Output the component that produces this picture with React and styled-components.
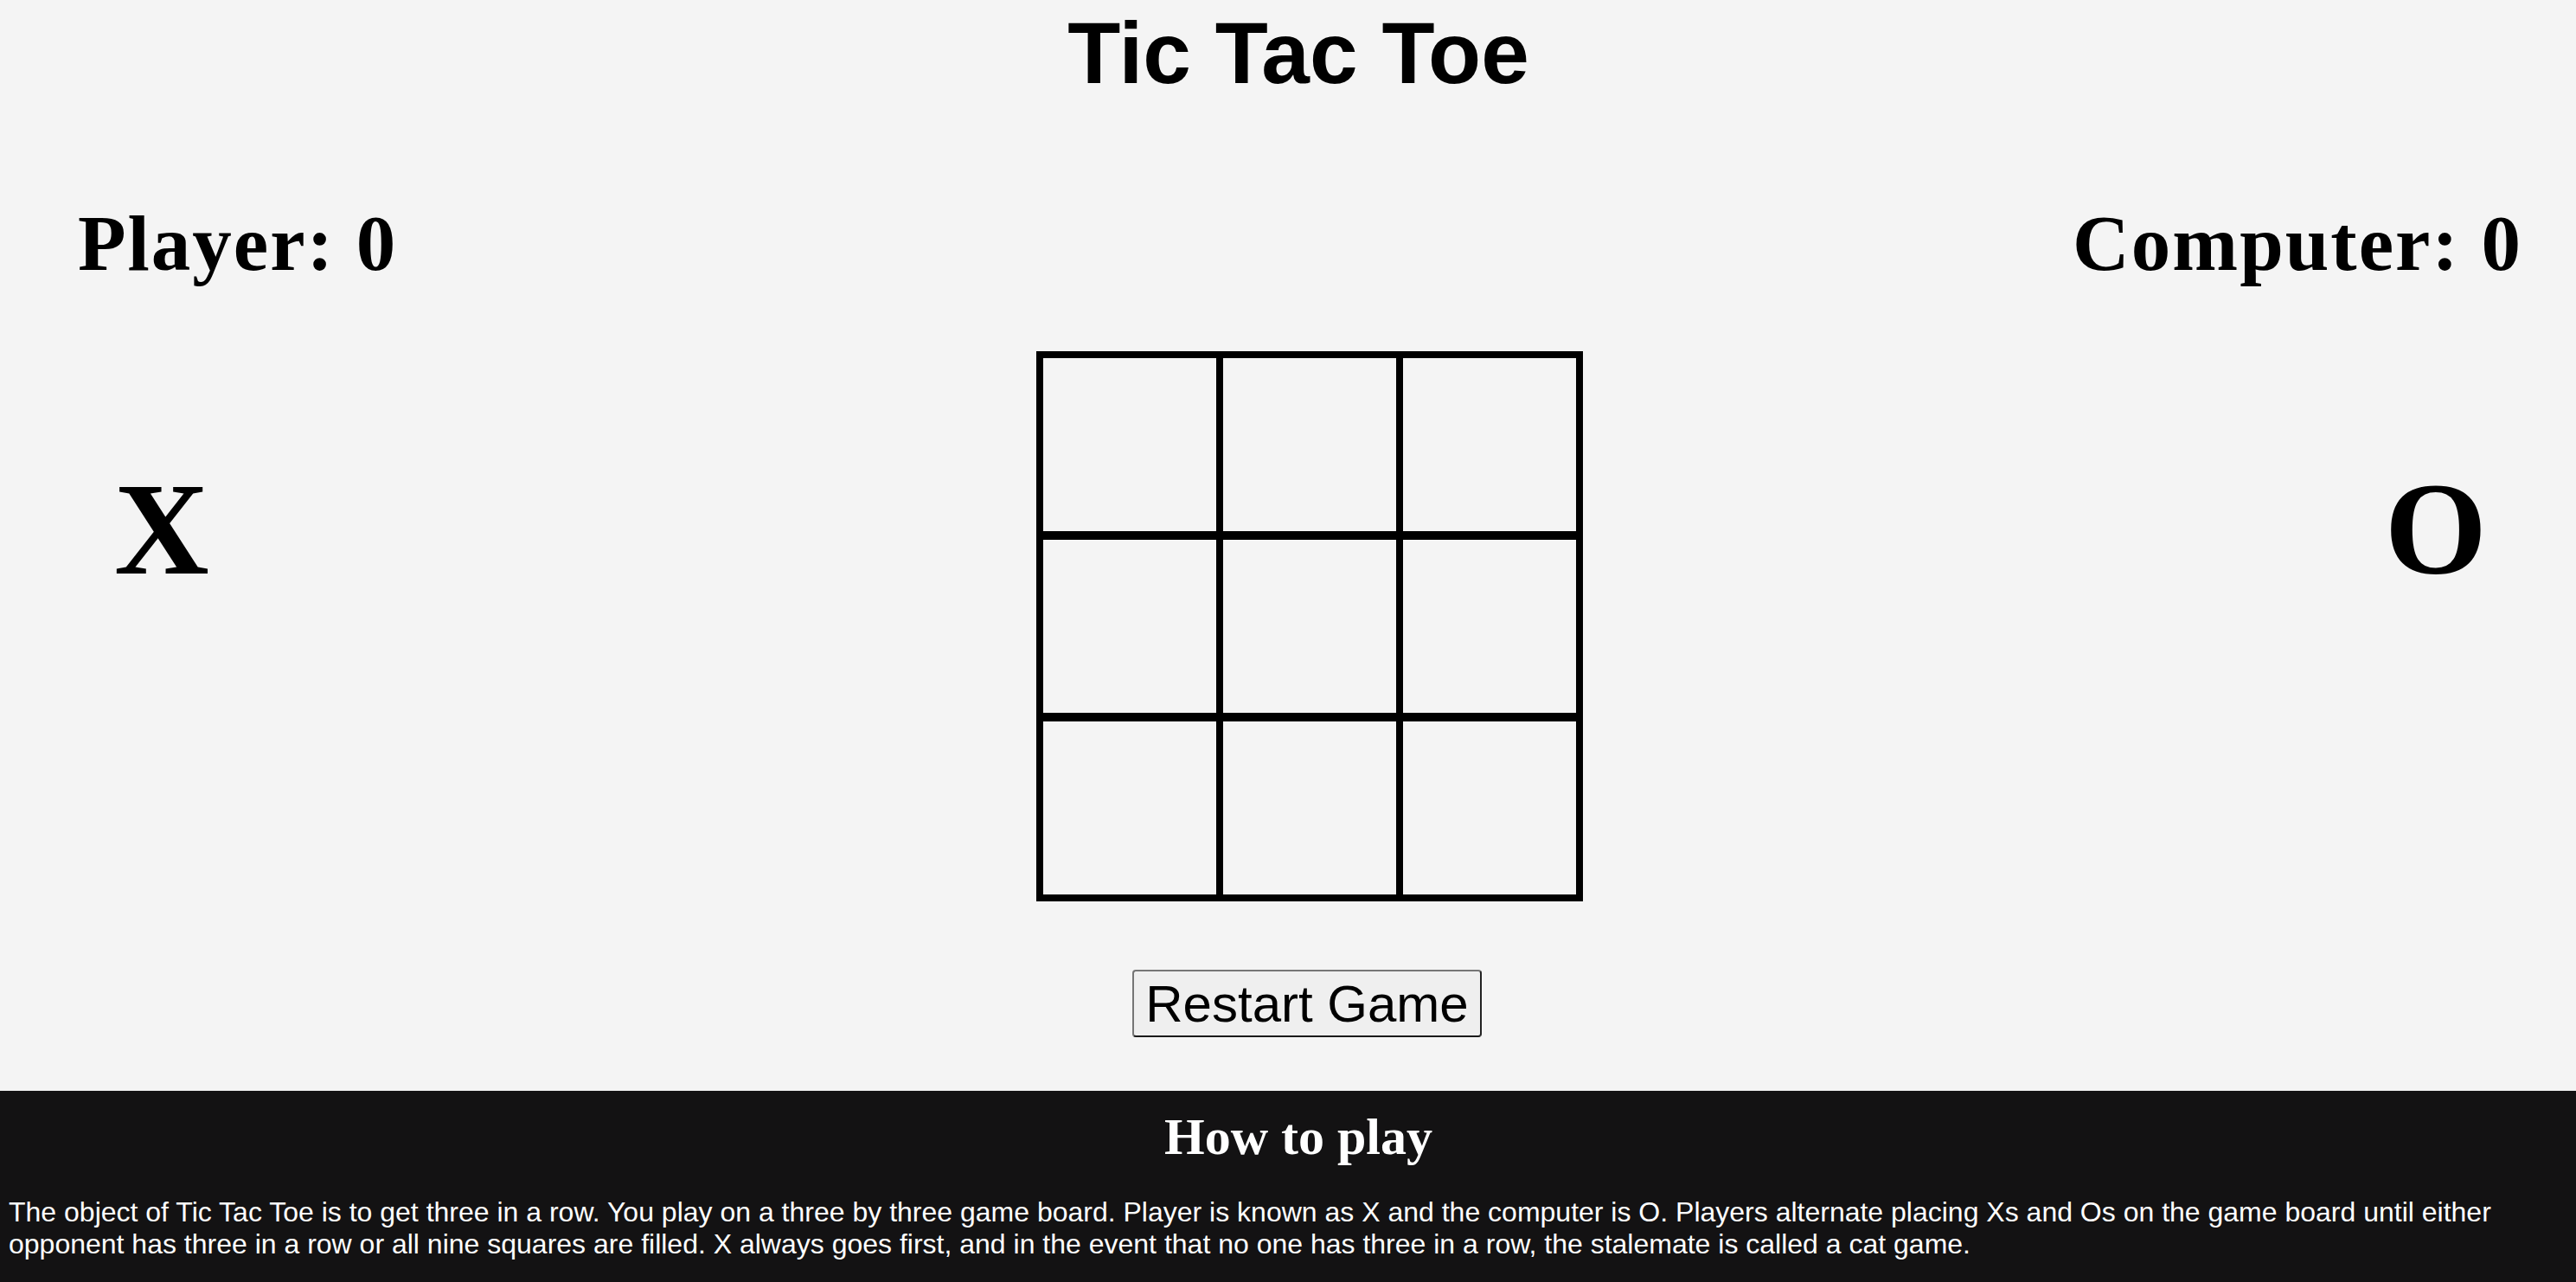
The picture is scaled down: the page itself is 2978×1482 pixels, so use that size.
import { useState } from "react";
import styled, { createGlobalStyle } from "styled-components";

const GlobalStyle = createGlobalStyle`
  body {
    margin: 0;
    background: #f4f4f4;
    color: #000;
    font-family: "Liberation Sans", Arial, sans-serif;
  }
`;

const Title = styled.h1`
  margin: 0;
  padding: 5px 0 0 24px;
  text-align: center;
  font-family: "Liberation Sans", Arial, sans-serif;
  font-size: 100px;
  line-height: 112px;
  font-weight: 700;
`;

const ScoreRow = styled.div`
  display: flex;
  justify-content: space-between;
  margin-top: 114px;
  padding: 0 62px 0 90px;
`;

const Score = styled.h2`
  margin: 0;
  font-family: "Liberation Serif", Georgia, serif;
  font-size: 91px;
  line-height: 101px;
  font-weight: 700;
  letter-spacing: 2px;
`;

const GameRow = styled.div`
  display: grid;
  grid-template-columns: 1fr auto 1fr;
  align-items: start;
  margin-top: 74px;
  padding-left: 50px;
`;

const Mark = styled.div`
  display: flex;
  justify-content: ${({ $side }) => ($side === "left" ? "flex-start" : "flex-end")};
  padding: ${({ $side }) => ($side === "left" ? "123px 0 0 82px" : "123px 103px 0 0")};
  font-family: "Liberation Serif", Georgia, serif;
  font-size: 152px;
  line-height: 166px;
  font-weight: 700;
`;

const Board = styled.div`
  display: grid;
  grid-template-columns: repeat(3, 208px);
  grid-auto-rows: 208px;
  row-gap: 2px;
  border: 4px solid #000;
  background: #000;
`;

const Cell = styled.button`
  box-sizing: border-box;
  margin: 0;
  padding: 0;
  border: 4px solid #000;
  background: #f4f4f4;
  font-family: "Liberation Serif", Georgia, serif;
  font-size: 150px;
  font-weight: 700;
  cursor: pointer;
`;

const Controls = styled.div`
  display: flex;
  justify-content: center;
  margin-top: 79px;
  padding-left: 44px;
`;

const RestartButton = styled.button`
  box-sizing: border-box;
  height: 78px;
  padding: 0 13px;
  border: 2px solid;
  border-color: #767676 #222 #1a1a1a #767676;
  border-radius: 4px;
  background: #efefef;
  color: #000;
  font-family: "Liberation Sans", Arial, sans-serif;
  font-size: 60px;
  line-height: 67px;
  cursor: pointer;
`;

const HowTo = styled.footer`
  margin-top: 62px;
  padding: 20px 10px 25px 10px;
  background: #131213;
  color: #fff;

  h2 {
    margin: 0;
    padding-left: 24px;
    text-align: center;
    font-family: "Liberation Serif", "Times New Roman", serif;
    font-size: 60px;
    line-height: 66px;
    font-weight: 700;
  }

  p {
    margin: 36px 0 0 0;
    font-family: "Liberation Sans", Arial, sans-serif;
    font-size: 32px;
    line-height: 37px;
  }
`;

const App = () => {
  const [cells, setCells] = useState(Array(9).fill(""));

  const play = (i) => {
    if (cells[i]) return;
    const next = [...cells];
    next[i] = "X";
    setCells(next);
  };

  return (
    <>
      <GlobalStyle />
      <Title>Tic Tac Toe</Title>
      <ScoreRow>
        <Score>Player: 0</Score>
        <Score>Computer: 0</Score>
      </ScoreRow>
      <GameRow>
        <Mark $side="left">X</Mark>
        <Board>
          {cells.map((c, i) => (
            <Cell key={i} onClick={() => play(i)}>
              {c}
            </Cell>
          ))}
        </Board>
        <Mark $side="right">O</Mark>
      </GameRow>
      <Controls>
        <RestartButton onClick={() => setCells(Array(9).fill(""))}>Restart Game</RestartButton>
      </Controls>
      <HowTo>
        <h2>How to play</h2>
        <p>
          The object of Tic Tac Toe is to get three in a row. You play on a three by three game board.
          Player is known as X and the computer is O. Players alternate placing Xs and Os on the game
          board until either opponent has three in a row or all nine squares are filled. X always goes
          first, and in the event that no one has three in a row, the stalemate is called a cat game.
        </p>
      </HowTo>
    </>
  );
};

export default App;
